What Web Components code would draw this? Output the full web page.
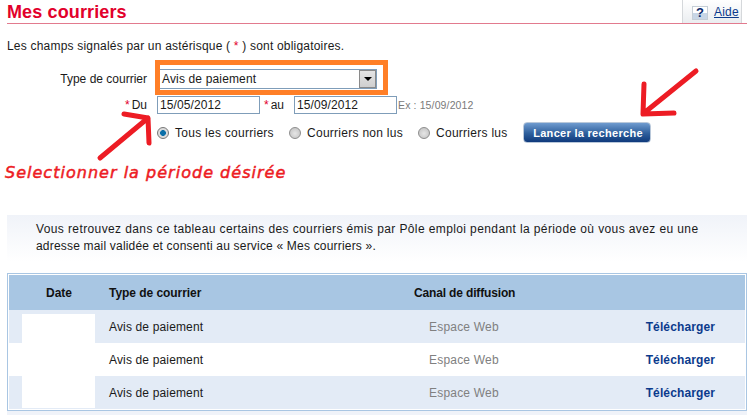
<!DOCTYPE html>
<html lang="fr">
<head>
<meta charset="utf-8">
<title>Mes courriers</title>
<style>
  html, body { margin: 0; background: #fff; }
  body { width: 752px; height: 415px; overflow: hidden; position: relative; font: 12px "Liberation Sans", Arial, sans-serif; }
</style>
</head>
<body>
<page-head>Mes courriers</page-head>
<search-form></search-form>
<info-text><span style="letter-spacing:.39px">Vous retrouvez dans ce tableau certains des courriers émis par Pôle emploi pendant la période où vous avez eu une</span><br><span style="letter-spacing:.19px">adresse mail validée et consenti au service « Mes courriers ».</span></info-text>
<mail-table>
  <mail-row type="Avis de paiement"></mail-row>
  <mail-row type="Avis de paiement" plain></mail-row>
  <mail-row type="Avis de paiement"></mail-row>
</mail-table>
<table-foot></table-foot>
<red-marks></red-marks>
<script>
class PageHead extends HTMLElement {
  constructor() {
    super();
    this.attachShadow({ mode: 'open' }).innerHTML = `
<style>
  :host { display: flex; justify-content: space-between; height: 23px; margin: 0 5px 0 7px; border-bottom: 1px solid #e27a8e; }
  h1 { margin: 0; font: bold 18px/24px "Liberation Sans", Arial, sans-serif; color: #e2002b; letter-spacing: 0.13px; }
  #help { display: flex; align-items: center; gap: 6px; box-sizing: border-box; width: 60px; margin-right: 5px; padding: 0 0 0 9px; background: linear-gradient(#fff, #eaedf0); border: solid #d5d8db; border-width: 0 1px; }
  #mark { box-sizing: border-box; width: 16px; height: 14px; margin-top: 2px; border: 1px solid #c5ced6; background: linear-gradient(#fff 50%, #c8d6e6 50%); color: #0b2a6b; font: bold 13px/12px "Liberation Sans", sans-serif; text-align: center; }
  a { color: #0b3a8c; text-decoration: underline; font-size: 12px; letter-spacing: 0.2px; }
</style>
<h1><slot></slot></h1>
<div id="help"><span id="mark">?</span><a>Aide</a></div>`;
  }
}
customElements.define('page-head', PageHead);

class RadioChoice extends HTMLElement {
  constructor() {
    super();
    this.attachShadow({ mode: 'open' }).innerHTML = `
<style>
  :host { display: flex; align-items: center; gap: 6px; }
  i { box-sizing: border-box; width: 12px; height: 12px; border-radius: 50%; border: 1px solid #8d8d8d; background: radial-gradient(circle at 50% 55%, #e6e6e6, #bdbdbd); }
  :host([checked]) i { border-color: #777; background: radial-gradient(circle, #0b6fa8 0 2.6px, #dcdcdc 3.2px); }
</style>
<i></i><span><slot></slot></span>`;
  }
}
customElements.define('radio-choice', RadioChoice);

class SearchForm extends HTMLElement {
  constructor() {
    super();
    this.attachShadow({ mode: 'open' }).innerHTML = `
<style>
  :host { display: block; padding: 15px 0 0 7px; color: #1a1a1a; }
  p { margin: 0; height: 14px; line-height: 14px; letter-spacing: 0.2px; }
  b { color: #e2002b; font-weight: normal; }
  .row { display: flex; align-items: center; }
  .label { width: 150px; padding-right: 10px; box-sizing: border-box; text-align: right; }
  #r1 { margin-top: 16px; height: 20px; }
  #r2 { margin-top: 7px; height: 18px; }
  #r3 { margin-top: 8px; height: 21px; letter-spacing: 0.27px; }
  #select { box-sizing: border-box; width: 220px; height: 20px; border: 1px solid #7f9db9; display: flex; align-items: center; justify-content: space-between; padding-left: 4px; background: #fff; letter-spacing: 0.15px; }
  #select span { width: 17px; height: 18px; background: linear-gradient(#e4e4e4, #cfcfcf); border: 1px solid #8a8a8a; box-sizing: border-box; display: flex; align-items: center; justify-content: center; }
  #select span::after { content: ""; border: 4px solid transparent; border-top: 4px solid #000; border-bottom: 0; }
  .date { box-sizing: border-box; width: 103px; height: 18px; line-height: 16px; border: 1px solid #7f9db9; padding-left: 2px; letter-spacing: 0.1px; }
  .au { box-sizing: border-box; width: 34px; padding-right: 10px; text-align: right; }
  .tight { margin-right: 2px; }
  small { font-size: 10.5px; color: #7a7a7a; margin-left: 1px; letter-spacing: 0.13px; }
  #radios { margin-left: 150px; display: flex; }
  radio-choice:nth-child(1) { width: 132px; }
  radio-choice:nth-child(2) { width: 129px; }
  radio-choice:nth-child(3) { width: 105px; }
  button { box-sizing: border-box; width: 128px; height: 21px; padding: 0 0 0 2px; border: 1px solid #b9c8da; border-radius: 4px; background: linear-gradient(#6f9bcf, #2e5f9c 55%, #0f3a7c); color: #fff; font: bold 11px "Liberation Sans", sans-serif; letter-spacing: 0.3px; }
</style>
<p>Les champs signalés par un astérisque ( <b>*</b> ) sont obligatoires.</p>
<div class="row" id="r1"><div class="label">Type de courrier</div><div id="select">Avis de paiement<span></span></div></div>
<div class="row" id="r2"><div class="label"><b class="tight">*</b>Du</div><div class="date">15/05/2012</div><div class="au"><b class="tight">*</b>au</div><div class="date">15/09/2012</div><small>Ex : 15/09/2012</small></div>
<div class="row" id="r3"><div id="radios"><radio-choice checked>Tous les courriers</radio-choice><radio-choice>Courriers non lus</radio-choice><radio-choice>Courriers lus</radio-choice></div><button>Lancer la recherche</button></div>`;
  }
}
customElements.define('search-form', SearchForm);

class InfoText extends HTMLElement {
  constructor() {
    super();
    this.attachShadow({ mode: 'open' }).innerHTML = `
<style>
  :host { display: block; box-sizing: border-box; margin: 72px 5px 0 7px; height: 58px; padding: 6px 0 0 29px; line-height: 17px; color: #1a1a1a; white-space: nowrap; background: linear-gradient(#f0f3f9, #fff 80%); }
</style>
<slot></slot>`;
  }
}
customElements.define('info-text', InfoText);

class MailTable extends HTMLElement {
  constructor() {
    super();
    this.attachShadow({ mode: 'open' }).innerHTML = `
<style>
  :host { display: block; position: relative; margin: 0 5px 0 7px; border: 1px solid #a9c6e3; padding: 1px; height: 134px; }
  #top { display: grid; grid-template-columns: 90px 315px 1fr 1fr; height: 35px; align-items: center; background: #a8c6e3; font-weight: bold; color: #111; letter-spacing: -0.05px; }
  #top div:first-child { text-align: center; padding-left: 10px; }
  #top div:nth-child(2) { padding-left: 10px; }
  #top div:nth-child(3) { letter-spacing: -0.15px; }
  #blank { position: absolute; left: 14px; top: 40px; width: 73px; height: 94px; background: #fff; }
</style>
<div id="top"><div>Date</div><div>Type de courrier</div><div>Canal de diffusion</div><div></div></div>
<slot></slot>
<div id="blank"></div>`;
  }
}
customElements.define('mail-table', MailTable);

class MailRow extends HTMLElement {
  constructor() {
    super();
    this.attachShadow({ mode: 'open' }).innerHTML = `
<style>
  :host { display: grid; grid-template-columns: 100px 320px 1fr auto; height: 33px; align-items: center; background: #e3ebf6; color: #1a1a1a; letter-spacing: 0.15px; }
  :host([plain]) { background: #fff; }
  #canal { color: #808080; letter-spacing: 0.2px; }
  a { color: #0b3a8c; font-weight: bold; margin-right: 30px; letter-spacing: 0.12px; }
</style>
<div></div><div id="type"></div><div id="canal">Espace Web</div><a>Télécharger</a>`;
  }
  connectedCallback() {
    this.shadowRoot.querySelector('#type').textContent = this.getAttribute('type');
  }
}
customElements.define('mail-row', MailRow);

class TableFoot extends HTMLElement {
  constructor() {
    super();
    this.attachShadow({ mode: 'open' }).innerHTML = `
<style>
  :host { display: block; height: 4px; margin: 0 5px 0 7px; background: #f0f3f9; }
</style>`;
  }
}
customElements.define('table-foot', TableFoot);

// paint annotations lying over the form
class RedMarks extends HTMLElement {
  constructor() {
    super();
    this.attachShadow({ mode: 'open' }).innerHTML = `
<style>
  :host { position: absolute; inset: 0; pointer-events: none; }
  #box { position: absolute; left: 155px; top: 60px; width: 223px; height: 25px; border: 5px solid #ff7f27; }
  svg { position: absolute; left: 0; top: 0; }
  p { position: absolute; left: 5px; top: 163px; margin: 0; font: italic 16px "DejaVu Sans", sans-serif; -webkit-text-stroke: 0.5px #ed1c24; letter-spacing: 1.02px; color: #ed1c24; white-space: nowrap; }
</style>
<div id="box"></div>
<svg width="752" height="415" fill="none" stroke="#ed1c24" stroke-width="5" stroke-linecap="round" stroke-linejoin="round">
  <path d="M100 158 L148 118 M124 114 L148 118 L149 143"/>
  <path d="M696 71 L644 113 M644 84 L643 114 L674 113"/>
</svg>
<p>Selectionner la période désirée</p>`;
  }
}
customElements.define('red-marks', RedMarks);
</script>
</body>
</html>
